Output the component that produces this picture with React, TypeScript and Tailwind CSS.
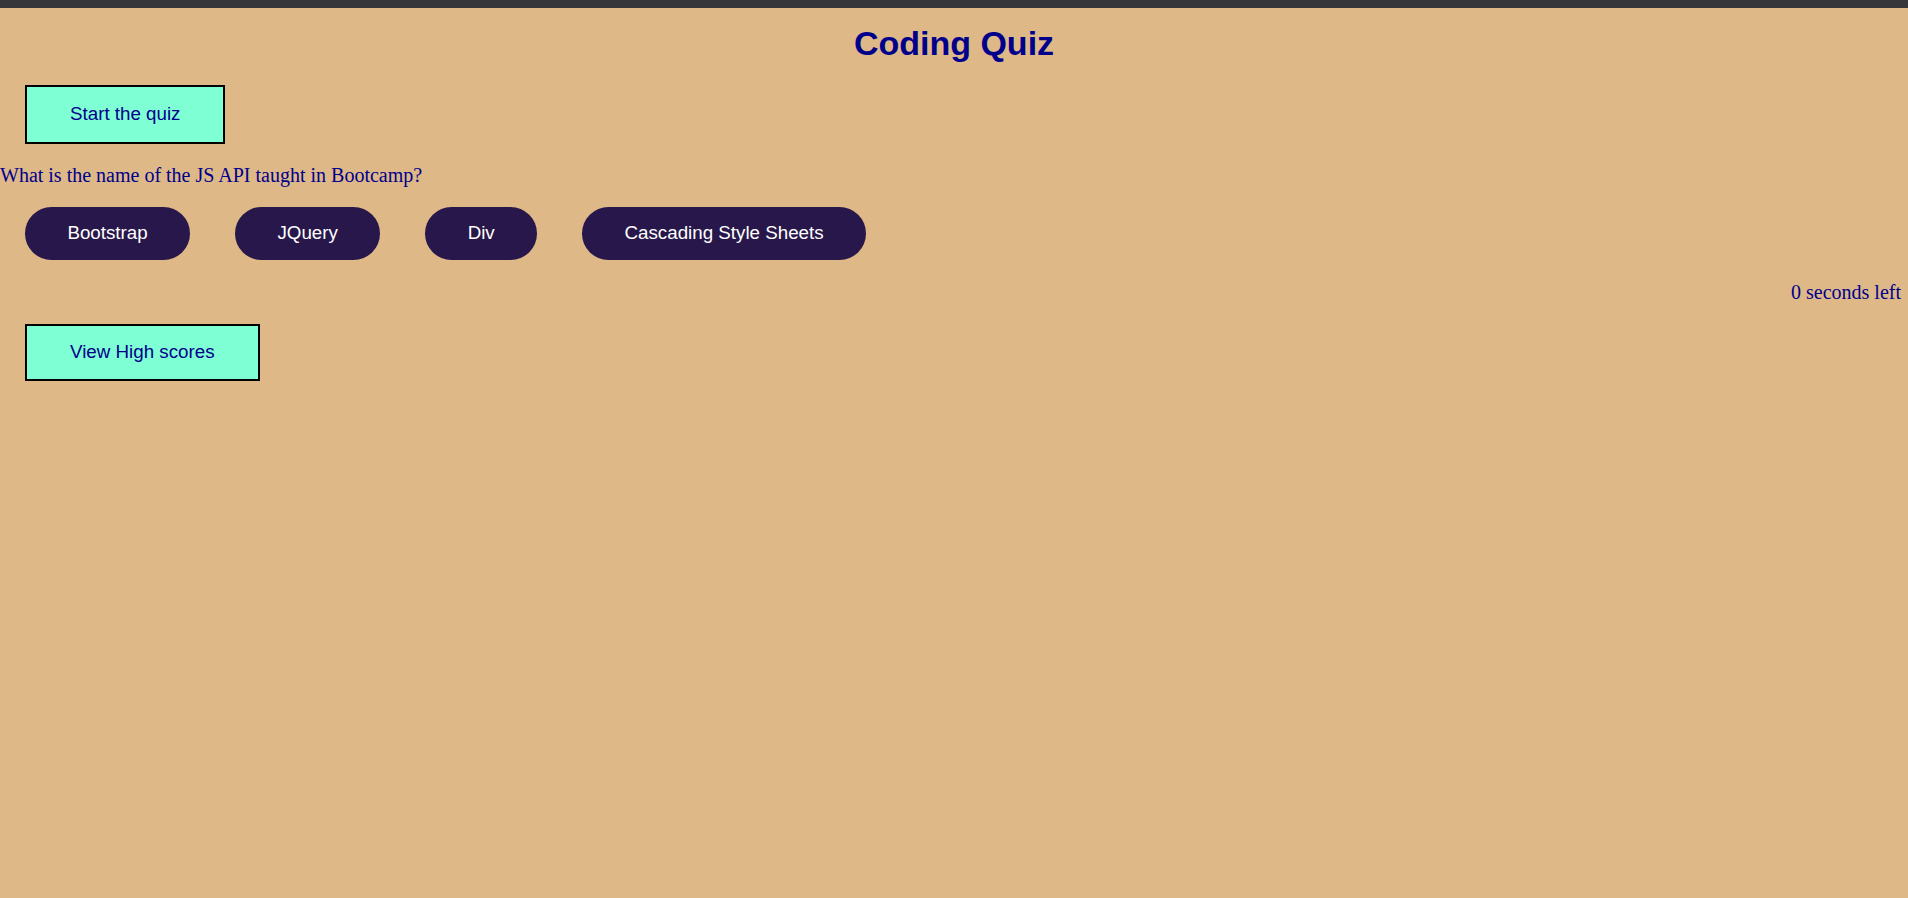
export default function App() {
  const answers = ["Bootstrap", "JQuery", "Div", "Cascading Style Sheets"];

  return (
    <div className="min-h-screen w-full bg-[#deb887] flex flex-col">
      <div className="h-[8px] w-full bg-[#35363a]"></div>

      <h1 className="mt-[18px] text-center text-[34px] leading-[34px] font-bold text-[#00008b] font-['Liberation_Sans',Arial,sans-serif]">
        Coding Quiz
      </h1>

      <div className="mt-[25px] ml-[25px]">
        <button className="h-[59px] px-[43px] border-2 border-black bg-[#7fffd4] text-[#00008b] text-[18.75px] font-['Liberation_Sans',Arial,sans-serif]">
          Start the quiz
        </button>
      </div>

      <p className="mt-[20px] text-[20px] leading-[23px] text-[#00008b] font-['Liberation_Serif','Times_New_Roman',serif]">
        What is the name of the JS API taught in Bootcamp?
      </p>

      <div className="mt-[20px] ml-[25px] flex gap-[45px]">
        {answers.map((answer) => (
          <button
            key={answer}
            className="h-[53px] px-[42.4px] rounded-full bg-[#28174a] text-white text-[18.75px] font-['Liberation_Sans',Arial,sans-serif]"
          >
            {answer}
          </button>
        ))}
      </div>

      <p className="mt-[21px] pr-[7px] text-right text-[20px] leading-[23px] text-[#00008b] font-['Liberation_Serif','Times_New_Roman',serif]">
        0 seconds left
      </p>

      <div className="mt-[20px] ml-[25px]">
        <button className="h-[57px] px-[43px] border-2 border-black bg-[#7fffd4] text-[#00008b] text-[18.75px] font-['Liberation_Sans',Arial,sans-serif]">
          View High scores
        </button>
      </div>
    </div>
  );
}
